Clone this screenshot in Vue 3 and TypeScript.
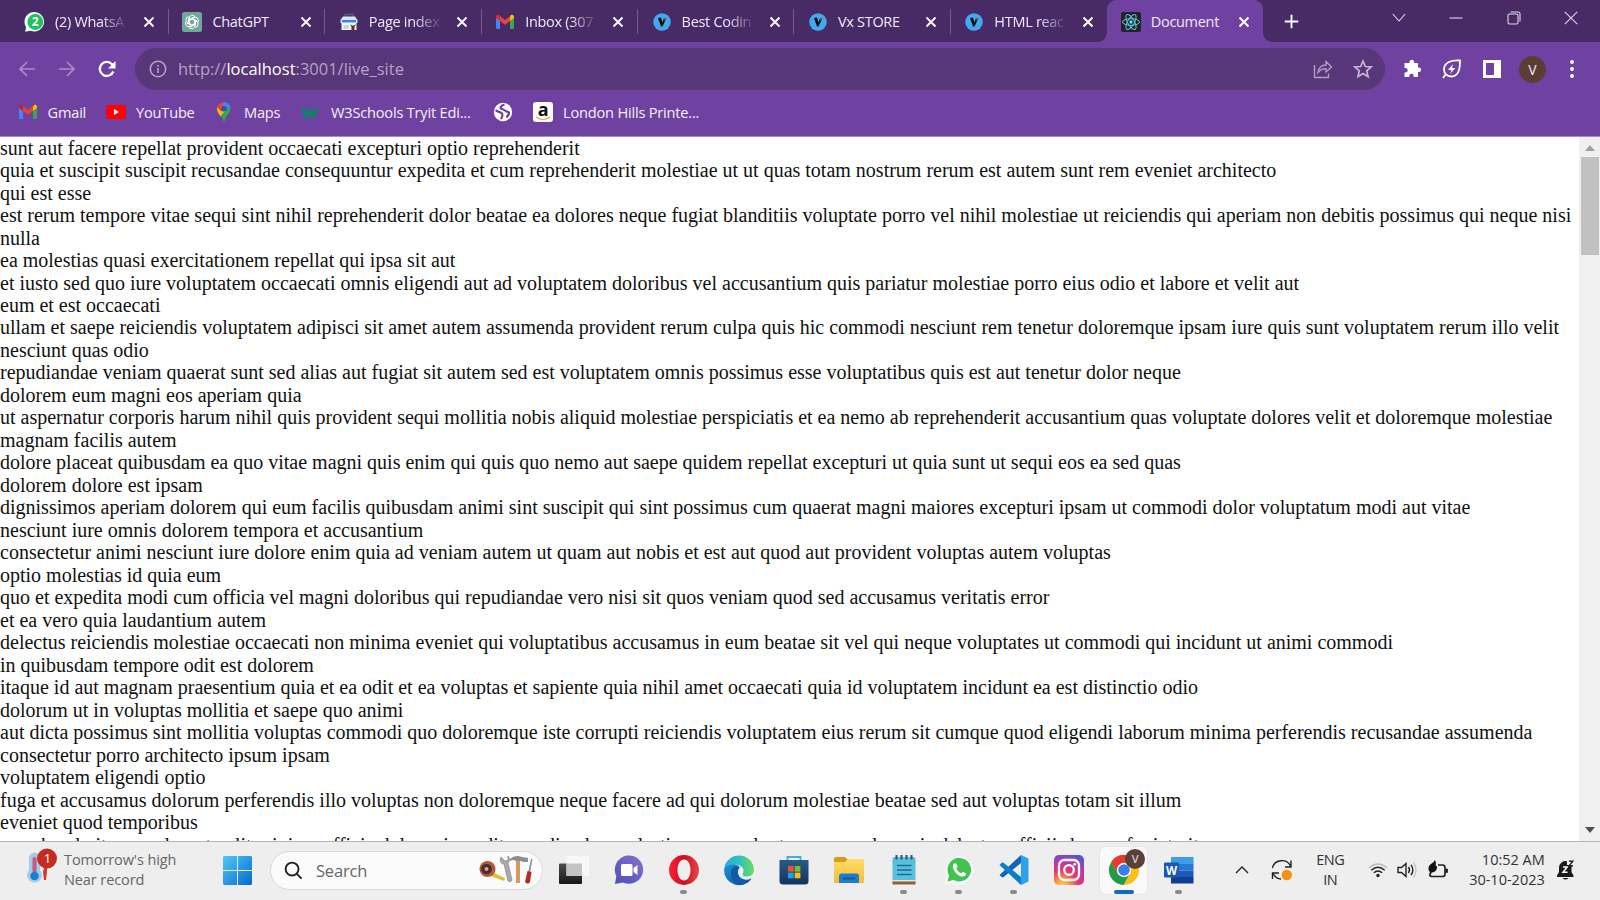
<script setup lang="ts">
interface Tab { icon: string; title: string; fade?: boolean; active?: boolean }
interface App { icon: string; state?: 'running' | 'active' }

const tabs: Tab[] = [
  { icon: 'whatsapp', title: '(2) WhatsA', fade: true },
  { icon: 'chatgpt', title: 'ChatGPT' },
  { icon: 'page', title: 'Page index', fade: true },
  { icon: 'gmail', title: 'Inbox (307', fade: true },
  { icon: 'vx', title: 'Best Codin', fade: true },
  { icon: 'vx', title: 'Vx STORE' },
  { icon: 'vx', title: 'HTML reac', fade: true },
  { icon: 'react', title: 'Document', active: true },
]

const apps: App[] = [
  { icon: 'taskview' },
  { icon: 'chat' },
  { icon: 'opera', state: 'running' },
  { icon: 'edge' },
  { icon: 'store' },
  { icon: 'explorer' },
  { icon: 'notepad', state: 'running' },
  { icon: 'whatsapp', state: 'running' },
  { icon: 'vscode', state: 'running' },
  { icon: 'instagram' },
  { icon: 'chrome', state: 'active' },
  { icon: 'word', state: 'running' },
]

const paragraphs: string[] = [
  'sunt aut facere repellat provident occaecati excepturi optio reprehenderit',
  'quia et suscipit suscipit recusandae consequuntur expedita et cum reprehenderit molestiae ut ut quas totam nostrum rerum est autem sunt rem eveniet architecto',
  'qui est esse',
  'est rerum tempore vitae sequi sint nihil reprehenderit dolor beatae ea dolores neque fugiat blanditiis voluptate porro vel nihil molestiae ut reiciendis qui aperiam non debitis possimus qui neque nisi nulla',
  'ea molestias quasi exercitationem repellat qui ipsa sit aut',
  'et iusto sed quo iure voluptatem occaecati omnis eligendi aut ad voluptatem doloribus vel accusantium quis pariatur molestiae porro eius odio et labore et velit aut',
  'eum et est occaecati',
  'ullam et saepe reiciendis voluptatem adipisci sit amet autem assumenda provident rerum culpa quis hic commodi nesciunt rem tenetur doloremque ipsam iure quis sunt voluptatem rerum illo velit',
  'nesciunt quas odio',
  'repudiandae veniam quaerat sunt sed alias aut fugiat sit autem sed est voluptatem omnis possimus esse voluptatibus quis est aut tenetur dolor neque',
  'dolorem eum magni eos aperiam quia',
  'ut aspernatur corporis harum nihil quis provident sequi mollitia nobis aliquid molestiae perspiciatis et ea nemo ab reprehenderit accusantium quas voluptate dolores velit et doloremque molestiae',
  'magnam facilis autem',
  'dolore placeat quibusdam ea quo vitae magni quis enim qui quis quo nemo aut saepe quidem repellat excepturi ut quia sunt ut sequi eos ea sed quas',
  'dolorem dolore est ipsam',
  'dignissimos aperiam dolorem qui eum facilis quibusdam animi sint suscipit qui sint possimus cum quaerat magni maiores excepturi ipsam ut commodi dolor voluptatum modi aut vitae',
  'nesciunt iure omnis dolorem tempora et accusantium',
  'consectetur animi nesciunt iure dolore enim quia ad veniam autem ut quam aut nobis et est aut quod aut provident voluptas autem voluptas',
  'optio molestias id quia eum',
  'quo et expedita modi cum officia vel magni doloribus qui repudiandae vero nisi sit quos veniam quod sed accusamus veritatis error',
  'et ea vero quia laudantium autem',
  'delectus reiciendis molestiae occaecati non minima eveniet qui voluptatibus accusamus in eum beatae sit vel qui neque voluptates ut commodi qui incidunt ut animi commodi',
  'in quibusdam tempore odit est dolorem',
  'itaque id aut magnam praesentium quia et ea odit et ea voluptas et sapiente quia nihil amet occaecati quia id voluptatem incidunt ea est distinctio odio',
  'dolorum ut in voluptas mollitia et saepe quo animi',
  'aut dicta possimus sint mollitia voluptas commodi quo doloremque iste corrupti reiciendis voluptatem eius rerum sit cumque quod eligendi laborum minima perferendis recusandae assumenda consectetur porro architecto ipsum ipsam',
  'voluptatem eligendi optio',
  'fuga et accusamus dolorum perferendis illo voluptas non doloremque neque facere ad qui dolorum molestiae beatae sed aut voluptas totam sit illum',
  'eveniet quod temporibus',
  'reprehenderit quos placeat velit minima officia dolores impedit repudiandae molestiae nam voluptas recusandae quis delectus officiis harum fugiat vitae',
]
</script>

<template>
  <div class="screen">
    <header class="tabstrip">
      <div v-for="(t, i) in tabs" :key="i" class="tab" :class="{ active: t.active }">
        <svg v-if="t.icon === 'whatsapp'" class="fav" viewBox="0 0 20 20"><path d="M.200 19.800 1 15A9.800 9.800 0 1 1 5.500 18.800Z" fill="#e9fff0" /><circle cx="10.300" cy="10" r="7.900" fill="#22c05c" /><text x="10.200" y="14.300" text-anchor="middle" class="badge-two">2</text></svg>
        <svg v-else-if="t.icon === 'chatgpt'" class="fav" viewBox="0 0 20 20"><rect width="20" height="20" rx="2.500" fill="#74a79c" /><g fill="none" stroke="#fff" stroke-width="1"><path v-for="a in 6" :key="a" :transform="`rotate(${a * 60} 10 10)`" d="M7.200 11.600V6.300A3.200 3.200 0 0 1 13 4.600M7.200 8.400 10.600 6.400 15.200 9" /></g></svg>
        <svg v-else-if="t.icon === 'page'" class="fav" viewBox="0 0 20 20"><path d="M6 5V2.500h8V5" fill="none" stroke="#51636f" stroke-width="1.300" /><path d="M1.500 8 4 4.500h12L18.500 8v3h-17z" fill="#d6e5fa" /><path d="M2.500 10h15v8h-15z" fill="#f5f7fa" /><path d="M3 8h14v2.500H3z" fill="#3f86df" /><path d="M4.500 13h5v4h-5z" fill="#c9d2de" /><path d="m11 12 1.500 3v3.500h3V15l1.500-3-2 1.500h-2z" fill="#4b3a2a" /></svg>
        <svg v-else-if="t.icon === 'gmail'" class="fav" viewBox="0 0 20 20"><path d="M1 5v10.500A1.500 1.500 0 0 0 2.500 17H5V8z" fill="#4285f4" /><path d="M15 8v9h2.500a1.500 1.500 0 0 0 1.500-1.500V5z" fill="#34a853" /><path d="M15 4.500V9l4-3V4.800c0-1.800-2-2.600-3.300-1.500z" fill="#fbbc04" /><path d="M5 9V4.200L10 8l5-3.800V9l-5 3.800z" fill="#ea4335" /><path d="M1 4.800V6l4 3V4.200l-.7-.9C3 2.200 1 3 1 4.800z" fill="#d93025" /></svg>
        <svg v-else-if="t.icon === 'vx'" class="fav" viewBox="0 0 20 20"><circle cx="10" cy="10" r="8.800" fill="#42a8f0" /><path d="m6 6 3-.5 1.500 5L12 6h2.500l-4 8.500H9z" fill="#111" /><path d="m12.500 5.500 1.500.5-1.500 3z" fill="#c58b5b" /></svg>
        <svg v-else class="fav" viewBox="0 0 20 20"><rect width="20" height="20" rx="2" fill="#20232a" /><g fill="none" stroke="#61c8dc" stroke-width="1"><ellipse cx="10" cy="10" rx="8.500" ry="3.300" /><ellipse cx="10" cy="10" rx="8.500" ry="3.300" transform="rotate(60 10 10)" /><ellipse cx="10" cy="10" rx="8.500" ry="3.300" transform="rotate(120 10 10)" /></g><circle cx="10" cy="10" r="1.700" fill="#61dafb" /></svg>
        <span class="title" :class="{ fade: t.fade }">{{ t.title }}</span>
        <svg class="close" viewBox="0 0 12 12"><path d="m1.500 1.500 9 9m0-9-9 9" /></svg>
      </div>
      <svg class="plus" viewBox="0 0 16 16"><path d="M8 .8v14.400M.8 8h14.400" /></svg>
      <div class="window-controls">
        <svg viewBox="0 0 14 14"><path d="m.8 3 6.200 7L13.200 3" /></svg>
        <svg viewBox="0 0 14 14"><path d="M.5 7h13" /></svg>
        <svg viewBox="0 0 14 14"><rect x="1" y="3" width="10" height="10" rx="1.500" /><path d="M3.500 1H11a2 2 0 0 1 2 2v7.500" /></svg>
        <svg viewBox="0 0 14 14"><path d="m.8.8 12.400 12.400m0-12.400L.8 13.200" /></svg>
      </div>
    </header>

    <div class="toolbar">
      <svg class="nav dim" viewBox="0 0 18 18"><path d="M17 9H2m7-7L2 9l7 7" /></svg>
      <svg class="nav dim" viewBox="0 0 18 18"><path d="M1 9h15M9 2l7 7-7 7" /></svg>
      <svg class="nav reload" viewBox="0 0 18 18"><path d="M15.300 11.500A7 7 0 1 1 14 4.200L16 6" /><path class="solid" d="M17.500 1v7.500H10z" /></svg>
      <div class="omnibox">
        <svg class="info" viewBox="0 0 18 18"><circle cx="9" cy="9" r="7.700" /><path d="M9 8v5M9 5v1.800" /></svg>
        <span class="url">http://<b>localhost</b>:3001/live_site</span>
        <svg class="share" viewBox="0 0 20 20"><path d="M1.500 6v12.500h14v-4" /><path d="M5 13.500C5.500 8.500 9 6 13 6V2.500L18.500 8 13 13V9.800C9.500 9.500 7 11 5 13.500Z" /></svg>
        <svg class="star" viewBox="0 0 20 20"><path d="m10 2 2.300 5.500 5.900.5-4.500 3.900 1.400 5.800L10 14.600l-5.100 3.100 1.400-5.800L1.800 8l5.900-.5z" /></svg>
      </div>
      <svg class="tool" viewBox="0 0 20 20"><path d="M3 4h4.500V3a2.300 2.300 0 0 1 4.600 0v1H16v4.500h.8a2.300 2.300 0 0 1 0 4.600H16V18h-4.300v-1a2.200 2.200 0 0 0-4.400 0v1H2.500v-4.500h1a2.200 2.200 0 0 0 0-4.400h-1V4z" fill="#fff" /></svg>
      <svg class="tool" viewBox="0 0 20 20"><path d="M18 1.500C10 1 2 3 2 10.500c0 3.800 3 7 7 7 8 0 9-8 9-16ZM4 15l-3 4" fill="none" stroke="#fff" stroke-width="1.800" /><path d="m11 5-5 6h3.500L8 15l5.500-6H10z" fill="#fff" /></svg>
      <svg class="tool" viewBox="0 0 20 20"><path d="M1 1h18v18H1zM4 4v12h8V4z" fill="#fff" fill-rule="evenodd" /></svg>
      <span class="avatar">V</span>
      <svg class="more" viewBox="0 0 4 18"><circle cx="2" cy="2" r="1.900" /><circle cx="2" cy="9" r="1.900" /><circle cx="2" cy="16" r="1.900" /></svg>
    </div>

    <nav class="bookmarks">
      <svg viewBox="0 0 20 20"><path d="M1 5v10.500A1.500 1.500 0 0 0 2.500 17H5V8z" fill="#4285f4" /><path d="M15 8v9h2.500a1.500 1.500 0 0 0 1.500-1.500V5z" fill="#34a853" /><path d="M15 4.500V9l4-3V4.800c0-1.800-2-2.600-3.300-1.500z" fill="#fbbc04" /><path d="M5 9V4.200L10 8l5-3.800V9l-5 3.800z" fill="#ea4335" /><path d="M1 4.800V6l4 3V4.200l-.7-.9C3 2.200 1 3 1 4.800z" fill="#c5221f" /></svg>
      <span class="b0">Gmail</span>
      <svg viewBox="0 0 20 20"><rect y="3" width="20" height="14" rx="3" fill="#f00" /><path d="m8 7 5 3-5 3z" fill="#fff" /></svg>
      <span class="b1">YouTube</span>
      <svg viewBox="0 0 20 20"><path d="M10 0a7 7 0 0 0-5.400 2.500L8 5.400z" fill="#ea4335" /><path d="M10 0 7.500 5A3 3 0 0 1 12.300 8.600L16.200 3.900A7 7 0 0 0 10 0z" fill="#4285f4" /><path d="M4.600 2.500A7 7 0 0 0 4 10.500L8 5.400z" fill="#ea4335" /><path d="M4 10.500C3 8.500 2.900 7 3.200 5.500L7.700 9.200 12.300 8.600 6.500 14.500z" fill="#fbbc04" /><path d="M16.200 3.900C18.500 10.500 11.500 12 10.500 19q-.5 1.500-1 0C9 17 8 15.500 6.500 14z" fill="#34a853" /><circle cx="10" cy="7" r="2.500" fill="#3154aa" /></svg>
      <span class="b2">Maps</span>
      <svg viewBox="0 0 20 20"><path d="m1.500 6 3.500 9L8.500 8l3.500 7 3-8" fill="none" stroke="#078765" stroke-width="3.200" stroke-linejoin="round" /><path d="m16.500 5 2.500.5-2 1.500 2 2" fill="none" stroke="#078765" stroke-width=".8" /></svg>
      <span class="b3">W3Schools Tryit Edi...</span>
      <svg class="bm-globe" viewBox="0 0 20 20"><circle cx="10" cy="10" r="9.200" fill="#fff" /><path d="M2.600 8.200C5.500 10.500 7.500 9.800 8.800 11.300S9.500 14.500 8 17" fill="none" stroke="#6b3fa0" stroke-width="2.200" /><path d="M11.500 2.500C7.500 3.500 6.200 6.500 9.500 7.300S12 9.500 14.800 9.800 15 13.500 13.500 15.500" fill="none" stroke="#6b3fa0" stroke-width="2.200" /></svg>
      <svg viewBox="0 0 20 20"><rect width="20" height="20" rx="3" fill="#fff" /><text x="10" y="13.700" text-anchor="middle" class="amazon-a">a</text><path d="M3 15q7 5 14 0" fill="none" stroke="#f3a63b" stroke-width="1.200" /></svg>
      <span class="b5">London Hills Printe...</span>
    </nav>

    <main class="viewport">
      <div class="page"><p v-for="(p, i) in paragraphs" :key="i">{{ p }}</p></div>
      <div class="scrollbar">
        <svg class="arrow up" viewBox="0 0 10 6"><path d="M0 6 5 0l5 6z" /></svg>
        <div class="thumb"></div>
        <svg class="arrow down" viewBox="0 0 10 6"><path d="M0 0h10L5 6z" /></svg>
      </div>
    </main>

    <footer class="taskbar">
      <div class="weather">
        <svg viewBox="0 0 32 36"><path d="M3 10a5.500 5.500 0 0 1 11 0v12a7.500 7.500 0 1 1-11 0z" fill="#a5cbea" /><path d="M6.500 11a2 2 0 0 1 4 0v13h-4z" fill="#c55b80" /><circle cx="8.500" cy="28" r="4.300" fill="#1583d0" /><path d="M18 20h3v4l-1 8h-2l-1-8z" fill="#d23a32" /><circle cx="21" cy="10.500" r="10" fill="#c42b22" /><text x="21.500" y="15.300" text-anchor="middle" class="badge-one">1</text></svg>
        <div class="weather-text"><span>Tomorrow's high</span><span>Near record</span></div>
      </div>
      <svg class="start" viewBox="0 0 29 29"><defs><linearGradient id="win" x1="0" y1="0" x2="1" y2="1"><stop offset="0" stop-color="#4fc9fa" /><stop offset="1" stop-color="#0669cd" /></linearGradient></defs><path fill="url(#win)" d="M1 0h13v14H0V1zM15 0h13l1 1v13H15zM0 15h14v14H1l-1-1zM15 15h14v13l-1 1H15z" /></svg>
      <div class="search">
        <svg class="lens" viewBox="0 0 20 20"><circle cx="8.500" cy="8.500" r="6.800" /><path d="m13.500 13.500 5 5" /></svg>
        <span>Search</span>
        <svg class="tools" viewBox="0 0 56 30"><path d="M13 17 26 23l-1 3-16-6z" fill="#dcc12d" /><ellipse cx="8.500" cy="14" rx="8" ry="8" fill="#b8553b" /><circle cx="7.500" cy="14" r="5.300" fill="#41312f" /><circle cx="7.500" cy="14" r="2" fill="#e3a282" /><path d="M22 2c-2 4 0 7 3 7l4 17q3 2 4-1L29 8c2-2 2-5 0-7v4l-3 1-2-2z" fill="#a8abad" stroke="#777b7e" stroke-width=".6" /><path d="M37 4h4v24h-4z" fill="#d69a5c" /><path d="M31 4q5-5 12-2l6 1v4h-5l-2-1h-5q-3-2-6 0z" fill="#8b8f91" /><path d="m52 4 1.500.3L51 18h-2z" fill="#8e9396" /><path d="m48.500 16 4 1-1.500 10q-2 3-5 0z" fill="#b52a27" /></svg>
      </div>
      <div class="apps">
        <div v-for="a in apps" :key="a.icon" class="app" :class="a.state">
          <svg v-if="a.icon === 'taskview'" viewBox="0 0 30 30"><defs><linearGradient id="tv" x2="0" y2="1"><stop stop-color="#4b4b4b" /><stop offset="1" stop-color="#171717" /></linearGradient></defs><rect x="0" y="8.500" width="23" height="20.500" rx="1" fill="url(#tv)" /><rect x="7.500" y="1" width="22.500" height="20" rx="1" fill="#f8f8f8" /><path d="M7.500 8.500H23V21H7.500z" fill="#c4c4c4" /></svg>
          <svg v-else-if="a.icon === 'chat'" viewBox="0 0 30 30"><defs><linearGradient id="ch" x1="0" y1="1" x2="1" y2="0"><stop stop-color="#4c50b8" /><stop offset="1" stop-color="#8a6fd0" /></linearGradient></defs><path d="M1 29 2.300 21A14.200 14.200 0 1 1 9 27.500z" fill="url(#ch)" /><rect x="7" y="9" width="11.500" height="12" rx="1.500" fill="#fff" /><path d="m19.500 13 4-3v10l-4-3z" fill="#fff" /></svg>
          <svg v-else-if="a.icon === 'opera'" viewBox="0 0 30 30"><defs><linearGradient id="op"><stop stop-color="#ff2038" /><stop offset=".5" stop-color="#c9101c" /><stop offset="1" stop-color="#e94848" /></linearGradient></defs><path fill="url(#op)" fill-rule="evenodd" d="M15 0a15 15 0 1 0 0 30 15 15 0 0 0 0-30m0 4.500c4 0 6.500 4.700 6.500 10.500S19 25.500 15 25.500 8.500 20.800 8.500 15 11 4.500 15 4.500" /></svg>
          <svg v-else-if="a.icon === 'edge'" viewBox="0 0 30 30"><defs><linearGradient id="e1"><stop stop-color="#29a8e0" /><stop offset=".5" stop-color="#2dc1bd" /><stop offset="1" stop-color="#6ddc5d" /></linearGradient><linearGradient id="e2" x1="0" y1="0" x2="1" y2="1"><stop stop-color="#1b96de" /><stop offset="1" stop-color="#0c4c8d" /></linearGradient></defs><path d="M0 15a15 15 0 0 0 27.500 8.500c-8 3.500-14-1.500-13.500-7 .2-2 1-3 2-4C12 7 1 7.500 0 15z" fill="url(#e2)" /><path d="M.2 13A15 15 0 0 1 30 15c0 4.500-3.500 6.500-7 6.500-4 0-5-1.500-4-3.500 2-4-1.500-8.500-8-8.500-5 0-9 1.500-10.800 3.500z" fill="url(#e1)" /><path d="M7 18c0-6 5-8 8-6-3 5-1 12 6 13 3 .5 5-.5 6.500-1.500C24 29 18 30.500 14 29.500 10 28.500 7 24 7 18z" fill="#135aa5" /></svg>
          <svg v-else-if="a.icon === 'store'" viewBox="0 0 30 30"><defs><linearGradient id="st" x2="0" y2="1"><stop stop-color="#285b88" /><stop offset="1" stop-color="#14345f" /></linearGradient></defs><path d="M8.500 7V2h13v5" fill="none" stroke="#3ab2e0" stroke-width="1.800" /><path d="M.5 5h29v21a3.500 3.500 0 0 1-3.500 3.500H4A3.500 3.500 0 0 1 .5 26z" fill="url(#st)" /><path d="M9 11h5.700v5.700H9z" fill="#f05128" /><path d="M15.700 11h5.700v5.700h-5.700z" fill="#7dbb29" /><path d="M9 17.600h5.700v5.700H9z" fill="#18a4e8" /><path d="M15.700 17.600h5.700v5.700h-5.700z" fill="#fdba19" /></svg>
          <svg v-else-if="a.icon === 'explorer'" viewBox="0 0 30 30"><defs><linearGradient id="ex" x2="0" y2="1"><stop stop-color="#ffdc68" /><stop offset="1" stop-color="#f5bd35" /></linearGradient></defs><path d="M0 4q0-2 2-2h9l3 3-3 4H0z" fill="#d49d1d" /><path d="M0 7h11l3-3h15l1 1v23H0z" fill="url(#ex)" /><path d="M5 28v-7q0-2.500 2.500-2.500h15Q25 18.500 25 21v7z" fill="#1b7dcc" /><path d="M9 23.500h12" stroke="#0c5a9e" stroke-width="2" /></svg>
          <svg v-else-if="a.icon === 'notepad'" viewBox="0 0 30 30"><path d="M3.500 26h23v3.500h-23z" fill="#985a30" /><path d="M3.500 24.500h23v2h-23z" fill="#f2e3cf" /><path d="M3.500 4q0-2 2-2h19q2 0 2 2v21h-23z" fill="#58c0dd" /><path d="M7.500 0v4.500m5-4.500v4.500m5-4.500v4.500m5-4.500v4.500" stroke="#24566e" stroke-width="2" /><path d="M8 10.500h14.500M8 15h14.500M8 19.500h14.500" stroke="#176b8e" stroke-width="1.600" /></svg>
          <svg v-else-if="a.icon === 'whatsapp'" viewBox="0 0 30 30"><path d="M1 29.500 2.500 21A14 14 0 1 1 9 28z" fill="#fafafa" /><path d="m3.500 26.500 1.500-6A11.800 11.800 0 1 1 9.500 25z" fill="#3fc351" /><path d="M9 10.500C9.500 8 12 7.800 12.700 9.300L13.600 11.500 12.300 13.500C13.500 16 15 17.300 17.300 18.300L19 16.700 22 18.300C22 21 20 22 17.500 21.500 13 20.500 8.800 15.500 9 10.500z" fill="#fff" /></svg>
          <svg v-else-if="a.icon === 'vscode'" viewBox="0 0 30 30"><path d="M22 0v8L4 22.500 2.500 22 .5 20z" fill="#1268b0" /><path d="M.5 10 3 7.500l1.500.3L22 22v8z" fill="#0b7ec8" /><path d="m22 0 7.500 3.500v23L22 30z" fill="#2ba2ec" /></svg>
          <svg v-else-if="a.icon === 'instagram'" viewBox="0 0 30 30"><defs><radialGradient id="ig" cx=".28" cy="1.050" r="1.100"><stop stop-color="#ffd563" /><stop offset=".22" stop-color="#fb9a3f" /><stop offset=".5" stop-color="#e5366c" /><stop offset=".75" stop-color="#bd35ad" /><stop offset="1" stop-color="#5d56cf" /></radialGradient></defs><rect width="30" height="30" rx="5" fill="url(#ig)" /><g fill="none" stroke="#fff" stroke-width="2.300"><rect x="5" y="5" width="20" height="20" rx="5.500" /><circle cx="15" cy="15" r="4.800" /></g><circle cx="20.700" cy="9.300" r="1.400" fill="#fff" /></svg>
          <template v-else-if="a.icon === 'chrome'">
            <svg viewBox="0 0 30 30"><circle cx="15" cy="15" r="15" fill="#fbc116" /><path d="M15 8.200H28.500A15 15 0 0 0 2 7.500L9.100 18.400z" fill="#e33b2e" /><path d="M2 7.500A15 15 0 0 0 14.500 30L20.900 18.400A6.800 6.800 0 0 1 9.100 18.400z" fill="#229a4a" /><circle cx="15" cy="15" r="7.200" fill="#fff" /><circle cx="15" cy="15" r="5.800" fill="#3b7de9" /></svg>
            <span class="profile">V</span>
          </template>
          <svg v-else viewBox="0 0 30 30"><path d="M7 2h22.500v7H7z" fill="#3d9fe8" /><path d="M7 9h22.500v6.500H7z" fill="#2478d0" /><path d="M7 15.500h22.500V22H7z" fill="#185abd" /><path d="M7 22h22.500v6.500H7z" fill="#103f91" /><rect y="7.500" width="15" height="15" rx="1" fill="#1759b5" /><text x="7.500" y="19.500" text-anchor="middle" class="word-w">W</text></svg>
          <i v-if="a.state" class="mark"></i>
        </div>
      </div>
      <div class="tray">
        <svg class="chev" viewBox="0 0 14 14"><path d="m1 10 6-6 6 6" /></svg>
        <svg class="sync" viewBox="0 0 22 22"><path d="M1.500 9A9.500 9 0 0 1 19.500 7M20 1.500V8h-6M1.500 20v-6H8M2 14.500q3 5.500 8 5.500" /><circle cx="15.800" cy="16" r="5.200" fill="#f6920f" stroke="none" /></svg>
        <div class="lang"><span>ENG</span><span>IN</span></div>
        <svg class="wifi" viewBox="0 0 20 16"><path d="M1 6Q10-2 19 6" opacity=".25" /><path d="M3.300 8.300Q10 2 16.700 8.300M5.800 10.800q4.200-3.700 8.400 0" /><circle cx="10" cy="13.500" r="1.700" fill="#222" stroke="none" /></svg>
        <svg class="vol" viewBox="0 0 20 18"><path d="M1 6.500h3.500L9 2.500v13l-4.500-4H1zM11.500 6q2 3 0 6M14 3.800q3.700 5.200 0 10.400" /><path d="M16.500 1.500q5 7.500 0 15" opacity=".2" /></svg>
        <svg class="batt" viewBox="0 0 22 20"><path d="M11 5H15.500A2.500 2.500 0 0 1 18 7.500V14a2.500 2.500 0 0 1-2.500 2.500H5A2.500 2.500 0 0 1 2.500 14.500" stroke-width="1.700" /><path d="M18.500 9H20.500v3.500H18.500z" fill="#222" stroke-width=".8" /><path d="M7.500 0C7.500 3 2 3.500 1.500 8 1.300 10 2 11 3 12L2 14.500 3.500 15 4.800 12.500C9 12.500 10.500 8.500 10 5.500 9 7 8.500 6.500 8.800 5 9 3 9 1 7.500 0z" fill="#111" stroke="none" /></svg>
        <div class="clock"><span>10:52 AM</span><span>30-10-2023</span></div>
        <svg class="bell" viewBox="0 0 20 22"><path d="M1 16.500 3 13V8.500A6.500 6.500 0 0 1 11 2.300V6H15.500v7l2 3.500V18H1zM6.500 19h6q-3 3-6 0z" fill="#1b1b1b" stroke="none" /><path d="M7 8h4.200L7 13.300h4.500" stroke="#fff" stroke-width="1.500" /><path d="M13 2.300h3.800L13 7h4" stroke="#222" stroke-width="1.400" /></svg>
      </div>
    </footer>
  </div>
</template>

<style>
html, body { margin: 0; overflow: hidden; }
</style>

<style scoped>
.screen { width: 1600px; height: 900px; display: flex; flex-direction: column; overflow: hidden; background: #fff; font-family: "Open Sans", "Noto Sans", sans-serif; }
svg { display: block; flex: none; overflow: visible; }
.tabstrip { height: 42px; flex: none; display: flex; align-items: stretch; background: #472a66; padding-left: 12px; color: #f0e9f7; }
.tab { box-sizing: border-box; width: 156.400px; flex: none; display: flex; align-items: center; padding-left: 14px; padding-top: 1px; position: relative; }
.tab:first-child { padding-left: 13px; }
.tab:not(.active):not(:nth-child(7))::after { content: ""; position: absolute; right: -.5px; top: 9px; width: 1px; height: 25px; background: #77598f; }
.tab.active { background: #6f42a1; border-radius: 9px 9px 0 0; }
.tab.active::before, .tab.active::after { content: ""; position: absolute; bottom: 0; width: 9px; height: 9px; }
.tab.active::before { left: -9px; background: radial-gradient(circle at 0 0, transparent 8.500px, #6f42a1 9px); }
.tab.active::after { right: -9px; background: radial-gradient(circle at 100% 0, transparent 8.500px, #6f42a1 9px); }
.fav { width: 20px; height: 20px; margin-right: 10px; }
.title { width: 75px; white-space: nowrap; font-size: 14.500px; letter-spacing: -.3px; line-height: 24px; flex: none; }
.title.fade { -webkit-mask-image: linear-gradient(90deg, #000 45px, transparent 74px); mask-image: linear-gradient(90deg, #000 45px, transparent 74px); }
.close { width: 12px; height: 12px; margin-left: 12.200px; fill: none; stroke: #fff; stroke-width: 1.900; }
.tab:first-child .close { margin-left: 12.700px; }
.plus { width: 15px; height: 15px; align-self: center; margin-left: 20.500px; fill: none; stroke: #fff; stroke-width: 2; }
.window-controls { display: flex; gap: 43.500px; margin-left: auto; padding: 11px 22px 0 0; }
.window-controls svg { width: 14px; height: 14px; fill: none; stroke: #e2d9ea; stroke-width: 1.100; }
.toolbar { height: 54px; flex: none; display: flex; align-items: center; background: #6f42a1; padding-left: 18px; }
.nav { width: 18px; height: 18px; margin-right: 22px; fill: none; stroke: #fff; stroke-width: 2.300; }
.nav.dim { stroke: #aa8bc9; stroke-width: 1.700; }
.nav .solid { fill: #fff; stroke: none; }
.nav.reload { margin-right: 19px; }
.omnibox { box-sizing: border-box; width: 1250px; height: 42px; flex: none; border-radius: 21px; background: #583678; display: flex; align-items: center; padding-left: 14px; color: #b7a1ca; }
.info { width: 18px; height: 18px; fill: none; stroke: #b7a1ca; stroke-width: 1.600; }
.url { margin-left: 11px; padding-bottom: 2px; font-size: 16.500px; white-space: nowrap; }
.url b { font-weight: 400; color: #fff; }
.share { width: 20px; height: 20px; margin-left: auto; fill: none; stroke: #b29bc6; stroke-width: 1.400; }
.star { width: 20px; height: 20px; margin: 0 12.500px 0 19.500px; fill: none; stroke: #c8b6d8; stroke-width: 1.700; }
.tool { width: 20px; height: 20px; margin-left: 17px; margin-right: 3px; }
.avatar { width: 27px; height: 27px; border-radius: 50%; background: #5b3d35; color: #eee; text-align: center; font-size: 14px; line-height: 27px; margin-left: 14px; }
.more { width: 4px; height: 18px; margin-left: 24px; fill: #fff; }
.bookmarks { box-sizing: border-box; height: 41px; flex: none; display: flex; align-items: center; background: #6f42a1; border-bottom: 1px solid #a78bc4; color: #f5effa; font-size: 14.600px; letter-spacing: -.2px; white-space: nowrap; padding: 0 0 8px 17.500px; }
.bookmarks svg { width: 20px; height: 20px; }
.bookmarks span { flex: none; padding-bottom: 1px; }
.b0 { width: 58.500px; margin-left: 10px; }
.b1 { width: 78px; margin-left: 10px; }
.b2 { width: 57px; margin-left: 10px; }
.b3 { width: 162px; margin-left: 10px; }
.bookmarks .bm-globe { margin-right: 20px; }
.b5 { margin-left: 10px; }
.viewport { height: 704px; flex: none; display: flex; }
.page { width: 1579px; overflow: hidden; font-family: "Liberation Serif", "Times New Roman", serif; font-size: 20px; line-height: 22.480px; color: #111; }
.page p { margin: 0; }
.page p:first-child { margin-top: -.4px; }
.scrollbar { width: 21px; background: #f0f0f0; display: flex; flex-direction: column; align-items: center; }
.arrow { width: 10px; height: 6px; }
.up { fill: #a0a0a0; margin: 8px 0 6px; }
.down { fill: #505050; margin: auto 0 8px; }
.thumb { width: 18px; height: 98px; background: #c1c1c1; }
.taskbar { box-sizing: border-box; height: 59px; flex: 1; background: #eee; border-top: 1px solid #b5b5b5; display: flex; align-items: center; color: #666; padding-bottom: 2px; }
.weather { width: 223px; display: flex; align-items: flex-start; flex: none; }
.weather > svg { width: 32px; height: 36px; margin: -2px 0 0 26px; }
.weather-text { display: flex; flex-direction: column; font-size: 14.500px; letter-spacing: -.1px; line-height: 20px; margin: 0 0 0 6px; white-space: nowrap; }
.start { width: 29px; height: 29px; }
.search { box-sizing: border-box; width: 273px; height: 39px; flex: none; margin-left: 18px; border: 1px solid #d9d9d9; border-radius: 20px; background: #fbfbfb; display: flex; align-items: center; font-size: 16.500px; letter-spacing: -.2px; }
.lens { width: 19px; height: 19px; margin: 0 13px 0 13px; fill: none; stroke: #222; stroke-width: 2; }
.tools { width: 56px; height: 30px; margin: 0 7px 0 auto; }
.apps { display: flex; margin-left: 7.300px; }
.app { box-sizing: border-box; width: 47px; height: 47px; margin-right: 8px; border-radius: 5px; position: relative; display: flex; justify-content: center; padding-top: 8px; }
.app > svg { width: 30px; height: 30px; }
.app.active { background: #f9f9f9; box-shadow: 0 0 1px #bbb; }
.mark { position: absolute; bottom: 0; left: 20px; width: 7px; height: 4px; border-radius: 2px; background: #8a8a8a; }
.active .mark { left: 13.500px; width: 20px; background: #0f6cbd; }
.profile { position: absolute; left: 25px; top: 2px; width: 20px; height: 20px; border-radius: 50%; background: #5b4038; color: #ccc; font-size: 11px; font-weight: 600; line-height: 20px; text-align: center; }
.tray { flex: 1; display: flex; align-items: center; color: #333; }
.tray > svg { fill: none; stroke: #222; stroke-width: 1.400; }
.chev { width: 14px; height: 14px; margin-left: 25px; }
.sync { width: 22px; height: 22px; margin-left: 22px; }
.lang, .clock { display: flex; flex-direction: column; line-height: 20px; font-size: 14.500px; white-space: nowrap; }
.lang { width: 54px; align-items: center; margin-left: 10px; }
.lang span { letter-spacing: -.5px; }
.wifi { width: 20px; height: 16px; margin-left: 10.500px; }
.vol { width: 20px; height: 18px; margin-left: 9px; }
.batt { width: 22px; height: 20px; margin-left: 10px; }
.clock { width: 90px; align-items: flex-end; margin-left: 6px; }
.bell { width: 20px; height: 22px; margin-left: 11px; }
.badge-two { font: 700 12px "Open Sans", sans-serif; fill: #fff; }
.badge-one { font: 400 13px "Open Sans", sans-serif; fill: #fff; }
.amazon-a { font: 700 18px "Open Sans", sans-serif; fill: #111; }
.word-w { font: 700 11.500px "Open Sans", sans-serif; fill: #fff; }
</style>
